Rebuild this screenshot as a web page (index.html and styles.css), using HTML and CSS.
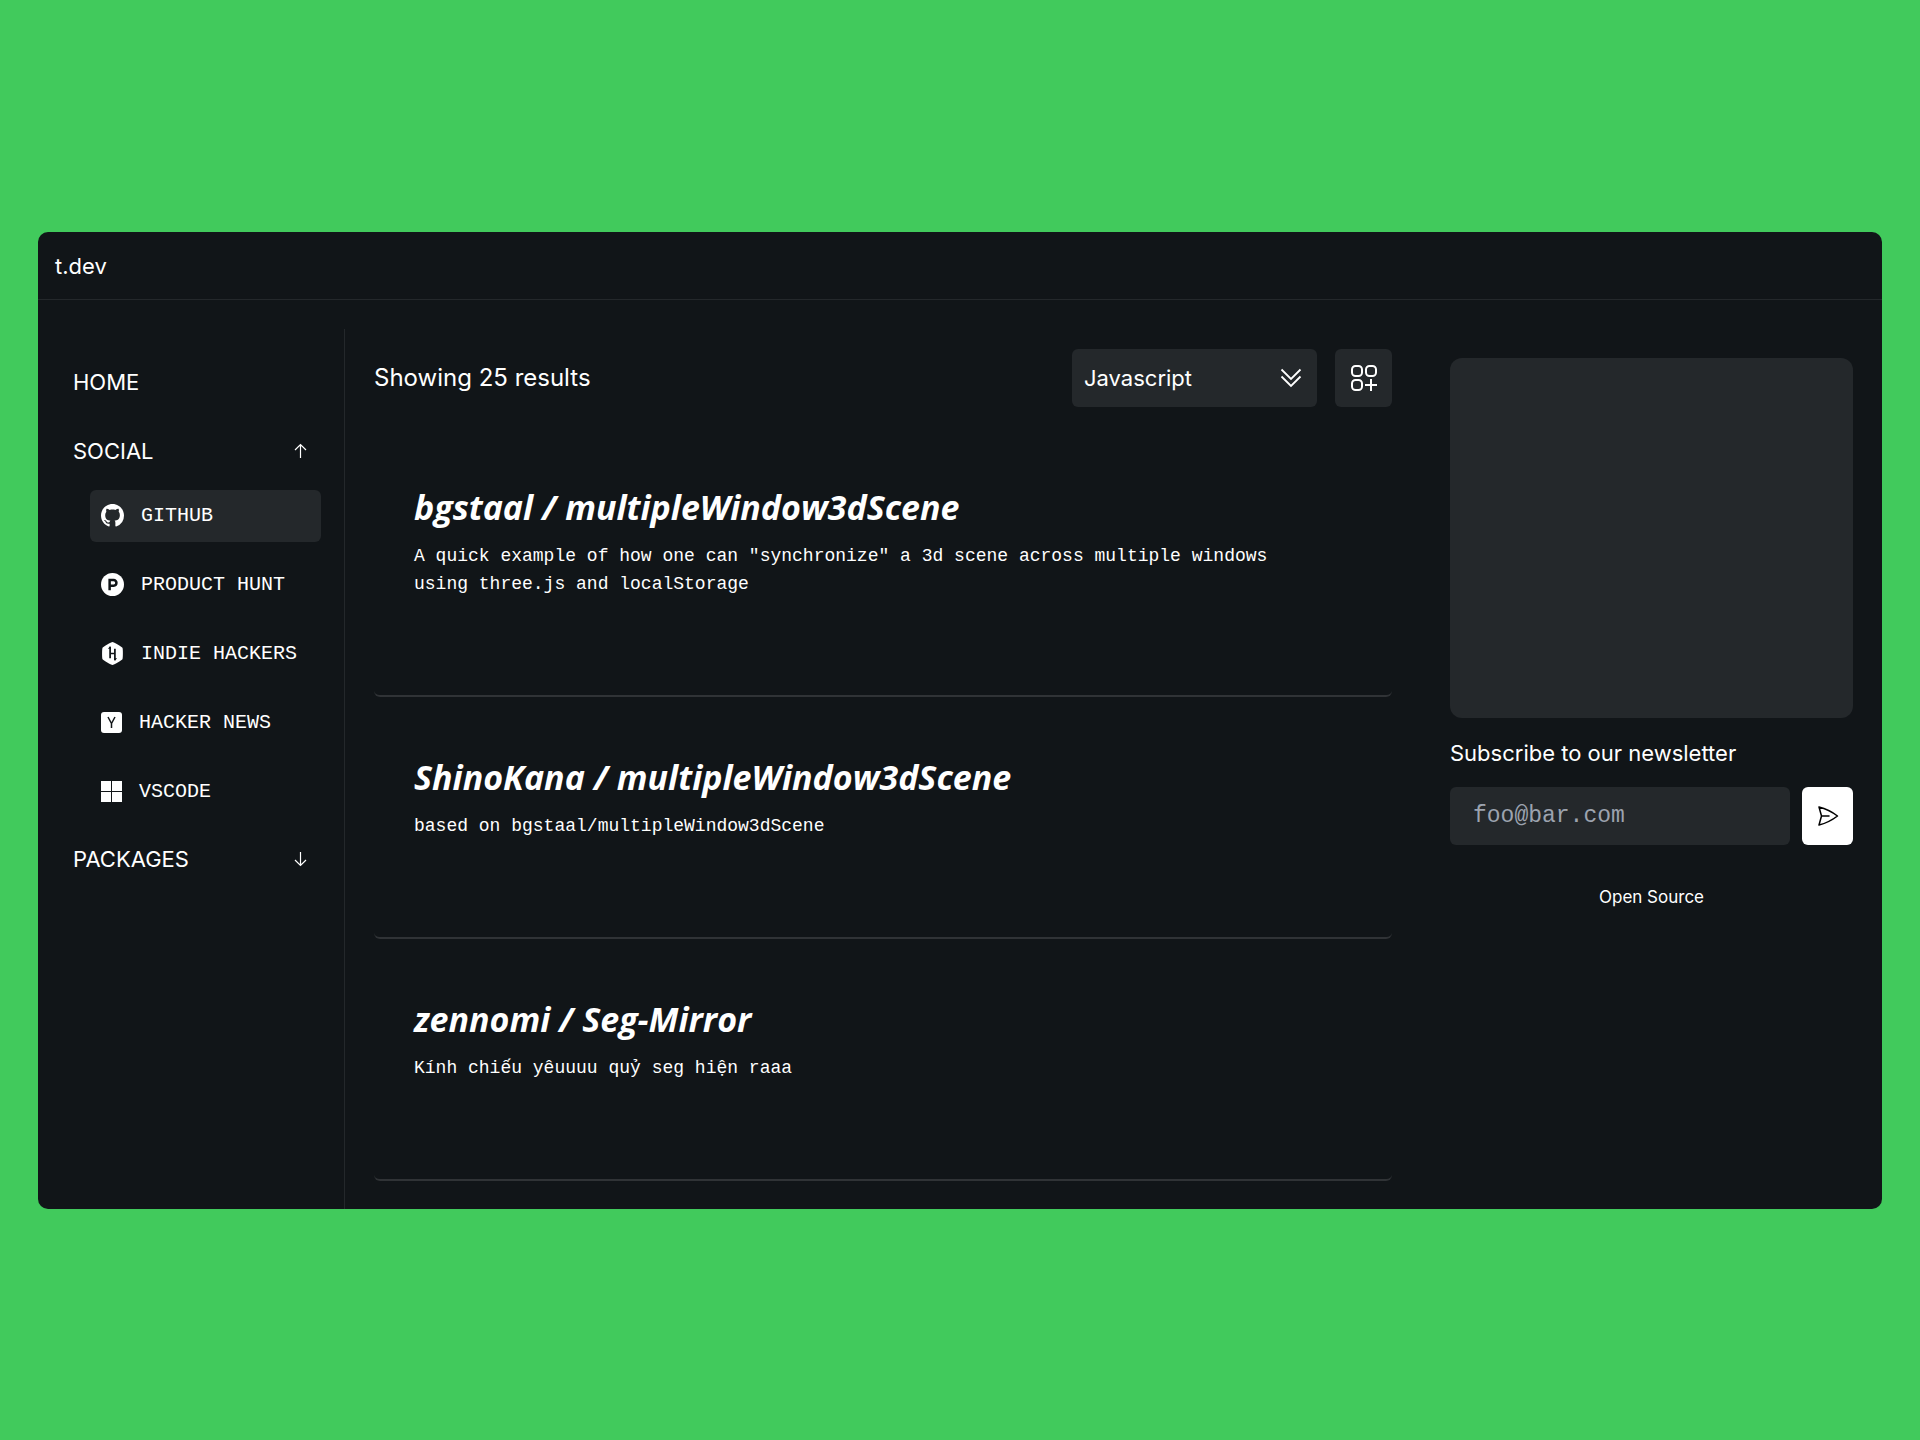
FILE: index.html
```
<!DOCTYPE html>
<html lang="en">
<head>
    <meta charset="UTF-8">
    <meta name="viewport" content="width=device-width, initial-scale=1.0">
    <title>t.dev</title>
    <link rel="stylesheet" href="styles.css">
</head>
<body>
    <div class="window">
        <header class="header">
            <a href="#" class="logo">t.dev</a>
        </header>
        <div class="container">
            <nav class="sidebar">
                <a href="#" class="nav-item">HOME</a>
                <button type="button" class="nav-item nav-toggle open">
                    SOCIAL
                    <svg width="18" height="18" viewBox="0 0 18 18" fill="none" stroke="currentColor" stroke-width="1.2"><path d="M9.5 16V2.5M4 8L9.5 2.5L15 8"/></svg>
                </button>
                <ul class="nav-list">
                    <li>
                        <a href="#" class="nav-link active">
                            <svg width="23" height="23" viewBox="0 0 16 16" fill="currentColor"><path d="M8 0C3.58 0 0 3.58 0 8c0 3.54 2.29 6.53 5.47 7.59.4.07.55-.17.55-.38 0-.19-.01-.82-.01-1.49-2.01.37-2.53-.49-2.69-.94-.09-.23-.48-.94-.82-1.13-.28-.15-.68-.52-.01-.53.63-.01 1.08.58 1.23.82.72 1.21 1.87.87 2.33.66.07-.52.28-.87.51-1.07-1.78-.2-3.64-.89-3.64-3.95 0-.87.31-1.59.82-2.15-.08-.2-.36-1.02.08-2.12 0 0 .67-.21 2.2.82.64-.18 1.32-.27 2-.27s1.36.09 2 .27c1.53-1.04 2.2-.82 2.2-.82.44 1.1.16 1.92.08 2.12.51.56.82 1.27.82 2.15 0 3.07-1.87 3.75-3.65 3.95.29.25.54.73.54 1.48 0 1.07-.01 1.93-.01 2.2 0 .21.15.46.55.38A8.01 8.01 0 0 0 16 8c0-4.42-3.58-8-8-8z"/></svg>
                            GITHUB
                        </a>
                    </li>
                    <li>
                        <a href="#" class="nav-link">
                            <svg width="23" height="23" viewBox="0 0 24 24"><circle cx="12" cy="12" r="12" fill="#fff"/><path d="M9 18V7.4h4.200a2.900 2.900 0 0 1 0 5.800H9" fill="none" stroke="#111518" stroke-width="2.6"/></svg>
                            PRODUCT HUNT
                        </a>
                    </li>
                    <li>
                        <a href="#" class="nav-link">
                            <svg width="23" height="23" viewBox="0 0 24 24"><path d="M12 0c1.2 0 9.8 5 10.4 6 .6 1 .6 11 0 12s-9.2 6-10.4 6-9.8-5-10.4-6c-.6-1-.6-11 0-12s9.2-6 10.4-6z" fill="#fff"/><path d="M9.500 5v12M14.500 7v12M9.500 12h5" fill="none" stroke="#111518" stroke-width="1.8"/><path d="M7.200 7L9.500 4.500l1 2.500zM16.800 17L14.500 19.500l-1-2.500z" fill="#111518"/></svg>
                            INDIE HACKERS
                        </a>
                    </li>
                    <li>
                        <a href="#" class="nav-link">
                            <svg width="21" height="21" viewBox="0 0 21 21"><rect width="21" height="21" rx="3" fill="#fff"/><path d="M7 5l3.5 6.5L14 5M10.5 11v5" fill="none" stroke="#111518" stroke-width="1.5"/></svg>
                            HACKER NEWS
                        </a>
                    </li>
                    <li>
                        <a href="#" class="nav-link">
                            <svg width="21" height="21" viewBox="0 0 21 21" fill="currentColor"><path d="M0 0h10v10H0zM11 0h10v10H11zM0 11h10v10H0zM11 11h10v10H11z"/></svg>
                            VSCODE
                        </a>
                    </li>
                </ul>
                <button type="button" class="nav-item nav-toggle">
                    PACKAGES
                    <svg width="18" height="18" viewBox="0 0 18 18" fill="none" stroke="currentColor" stroke-width="1.2"><path d="M9.5 2V15.5M4 10L9.5 15.5L15 10"/></svg>
                </button>
            </nav>

            <main class="main">
                <div class="toolbar">
                    <p class="results">Showing 25 results</p>
                    <div class="select-box">
                        <select class="language" aria-label="Language">
                            <option>Javascript</option>
                            <option>Typescript</option>
                            <option>Python</option>
                        </select>
                        <svg class="select-icon" width="22" height="20" viewBox="0 0 22 20" fill="none" stroke="currentColor" stroke-width="1.8"><path d="M1.5 1.5L11 11L20.5 1.5M1.5 8.5L11 18L20.5 8.5"/></svg>
                    </div>
                    <button type="button" class="grid-button" aria-label="Change layout">
                        <svg width="28" height="28" viewBox="0 0 28 28" fill="none" stroke="currentColor" stroke-width="2"><rect x="2" y="2" width="10" height="10" rx="3.5"/><rect x="16" y="2" width="10" height="10" rx="3.5"/><rect x="2" y="16" width="10" height="10" rx="3.5"/><path d="M21 15v12M15 21h12"/></svg>
                    </button>
                </div>
                <article class="card card-large">
                    <h2>bgstaal / multipleWindow3dScene</h2>
                    <p>A quick example of how one can "synchronize" a 3d scene across multiple windows using three.js and localStorage</p>
                </article>
                <article class="card">
                    <h2>ShinoKana / multipleWindow3dScene</h2>
                    <p>based on bgstaal/multipleWindow3dScene</p>
                </article>
                <article class="card">
                    <h2>zennomi / Seg-Mirror</h2>
                    <p>Kính chiếu yêuuuu quỷ seg hiện raaa</p>
                </article>
            </main>

            <aside class="aside">
                <div class="banner"></div>
                <form class="newsletter">
                    <label for="email">Subscribe to our newsletter</label>
                    <div class="newsletter-row">
                        <input type="email" id="email" placeholder="foo@bar.com">
                        <button type="submit" class="send" aria-label="Subscribe">
                            <svg width="22" height="22" viewBox="0 0 22 22" fill="none" stroke="currentColor" stroke-width="1.5" stroke-linejoin="round" stroke-linecap="round"><path d="M4.5 11L2 2Q12 4.5 20.5 11Q12 17.5 2 20ZM4.5 11H12"/></svg>
                        </button>
                    </div>
                </form>
                <a href="#" class="source">Open Source</a>
            </aside>
        </div>
    </div>
</body>
</html>
```
FILE: styles.css
```
* {
    box-sizing: border-box;
}
body {
    margin: 0;
    min-height: 100vh;
    padding: 38px;
    display: flex;
    flex-direction: column;
    justify-content: center;
    background: #41ca5c;
    color: #fff;
    font-family: Inter, "Liberation Sans", sans-serif;
    font-size: 22px;
    line-height: 32px;
}
a {
    color: inherit;
    text-decoration: none;
}
button, input, select {
    font: inherit;
    color: inherit;
    border: none;
    cursor: pointer;
}
svg {
    flex-shrink: 0;
}
.window {
    background: #111518;
    border-radius: 10px;
    overflow: hidden;
}
.header {
    padding: 18px 17px 17px;
    border-bottom: 1px solid #24282b;
}
.logo {
    display: block;
}
.container {
    display: flex;
    padding: 29px 29px 0 0;
}

/* sidebar */
.sidebar {
    width: 307px;
    flex-shrink: 0;
    padding: 27px 23px 0 35px;
    border-right: 1px solid #24282b;
}
.nav-item {
    display: flex;
    align-items: center;
    justify-content: space-between;
    width: 100%;
    height: 52px;
    margin-bottom: 17px;
    padding: 0 12px 0 0;
    background: none;
}
.nav-item.open {
    margin-bottom: 13px;
}
.nav-list {
    list-style: none;
    margin: 0 0 15px 17px;
    padding: 0;
    display: flex;
    flex-direction: column;
    gap: 17px;
}
.nav-link {
    display: flex;
    align-items: center;
    gap: 17px;
    height: 52px;
    padding: 0 11px;
    border-radius: 6px;
    font-family: "Liberation Mono", monospace;
    font-size: 20px;
    white-space: nowrap;
}
.nav-link.active {
    background: #24282b;
}

/* results */
.main {
    flex: 1;
    min-width: 0;
    padding: 20px 0 28px 29px;
}
.toolbar {
    display: flex;
    align-items: center;
    gap: 18px;
    margin-bottom: 40px;
}
.results {
    flex: 1;
    margin: 0;
    font-size: 24px;
}
.select-box {
    position: relative;
}
.language {
    display: block;
    width: 245px;
    height: 58px;
    padding: 0 12px;
    appearance: none;
    background: #24282b;
    border-radius: 6px;
}
.select-icon {
    position: absolute;
    top: 19px;
    right: 15px;
    pointer-events: none;
}
.grid-button {
    display: flex;
    align-items: center;
    justify-content: center;
    width: 57px;
    height: 58px;
    padding: 0;
    background: #24282b;
    border-radius: 6px;
}
.card {
    height: 242px;
    padding: 57px 40px 0;
    border-bottom: 2px solid #303336;
    border-radius: 6px;
}
.card-large {
    height: 250px;
    padding-top: 37px;
}
.card h2 {
    margin: 0 0 12px;
    font-family: "Open Sans", "Noto Sans", sans-serif;
    font-size: 34px;
    font-style: italic;
    font-weight: 700;
    line-height: 46px;
}
.card p {
    margin: 0;
    max-width: 880px;
    font-family: "Liberation Mono", monospace;
    font-size: 18px;
    line-height: 28px;
}

/* newsletter */
.aside {
    width: 403px;
    flex-shrink: 0;
    margin-left: 58px;
    padding-top: 29px;
}
.banner {
    height: 360px;
    margin-bottom: 19px;
    background: #24282b;
    border-radius: 12px;
}
.newsletter label {
    display: block;
    margin-bottom: 18px;
}
.newsletter-row {
    display: flex;
    gap: 12px;
}
.newsletter input {
    flex: 1;
    min-width: 0;
    height: 58px;
    padding: 0 23px;
    background: #24282b;
    border-radius: 6px;
    font-family: "Liberation Mono", monospace;
    font-size: 23px;
}
.newsletter input::placeholder {
    color: #9ca3af;
    opacity: 1;
}
.send {
    display: flex;
    align-items: center;
    justify-content: center;
    width: 51px;
    padding: 0;
    background: #fff;
    color: #000;
    border-radius: 6px;
}
.source {
    display: block;
    margin-top: 36px;
    font-size: 17px;
    text-align: center;
}
```
